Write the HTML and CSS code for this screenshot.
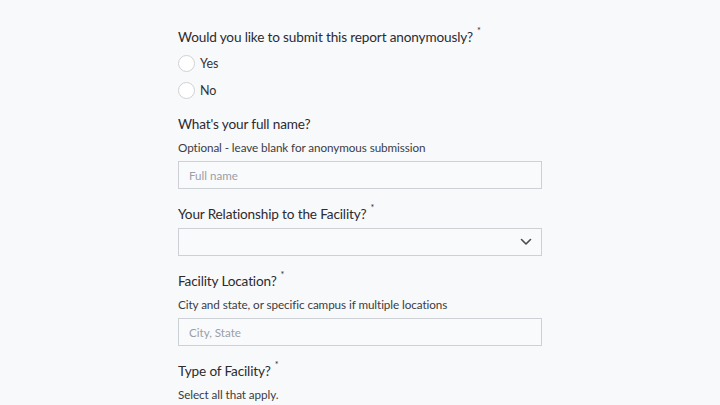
FILE: index.html
```html
<!DOCTYPE html>
<html lang="en">
<head>
<meta charset="utf-8">
<title>Report form</title>
<link rel="stylesheet" href="styles.css">
</head>
<body>
<main class="form">
  <section class="field field-radio">
    <div class="label">Would you like to submit this report anonymously?<span class="req">*</span></div>
    <div class="options">
      <label class="option"><span class="radio"></span><span>Yes</span></label>
      <label class="option"><span class="radio"></span><span>No</span></label>
    </div>
  </section>

  <section class="field">
    <div class="label">What's your full name?</div>
    <div class="help">Optional - leave blank for anonymous submission</div>
    <div class="input"><span class="placeholder">Full name</span></div>
  </section>

  <section class="field">
    <div class="label">Your Relationship to the Facility?<span class="req">*</span></div>
    <div class="input select">
      <span class="placeholder"></span>
      <svg class="chev" width="12" height="8" viewBox="0 0 12 8"><path d="M1.5 1.5 L6 6 L10.5 1.5" fill="none" stroke="#4a4a4a" stroke-width="1.6" stroke-linecap="round" stroke-linejoin="round"/></svg>
    </div>
  </section>

  <section class="field">
    <div class="label">Facility Location?<span class="req">*</span></div>
    <div class="help">City and state, or specific campus if multiple locations</div>
    <div class="input"><span class="placeholder">City, State</span></div>
  </section>

  <section class="field">
    <div class="label">Type of Facility?<span class="req">*</span></div>
    <div class="help">Select all that apply.</div>
  </section>
</main>
</body>
</html>
```

FILE: styles.css
```css
html, body {
  margin: 0;
  padding: 0;
  background: #f8f9fb;
}
body {
  font-family: Lato, "Open Sans", sans-serif;
  color: #2e2e33;
}
.form {
  width: 364px;
  margin: 0 auto;
  padding-top: 27px;
  display: flex;
  flex-direction: column;
}
.field {
  display: flex;
  flex-direction: column;
  margin-bottom: 15px;
}
.label {
  font-size: 13.6px;
  letter-spacing: -0.15px;
  line-height: 20px;
  margin-bottom: 4px;
  color: #2b2b30;
}
.req {
  font-size: 9px;
  vertical-align: 8px;
  margin-left: 4px;
  line-height: 0;
}
.help {
  font-size: 11.7px;
  letter-spacing: -0.08px;
  line-height: 16px;
  color: #3c3c42;
  margin-top: 1px;
  margin-bottom: 6px;
}
.options {
  display: flex;
  flex-direction: column;
  gap: 7px;
  margin-top: 2px;
  margin-bottom: -1px;
}
.option {
  display: flex;
  align-items: center;
  height: 20px;
  font-size: 12.5px;
  color: #333;
}
.radio {
  width: 15px;
  height: 15px;
  border: 1px solid #cfd1d6;
  border-radius: 50%;
  background: #fff;
  margin-right: 5px;
}
.input {
  height: 26px;
  border: 1px solid #cdd0d5;
  background: #f9fafc;
  display: flex;
  align-items: center;
  padding: 0 10px;
}
.placeholder {
  font-size: 11.6px;
  color: #9b9ea6;
  flex: 1;
}
.select .chev {
  margin-right: -1px;
}
```
